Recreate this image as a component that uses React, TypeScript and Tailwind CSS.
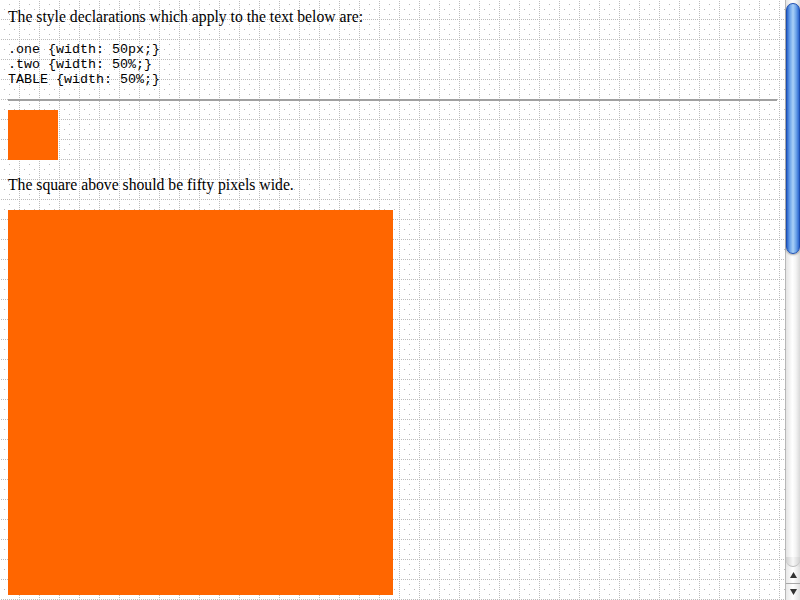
import React from "react";

const GridBg = () => {
  const odds = Array.from({ length: 10 }, (_, i) => i * 2 + 1);
  return (
    <svg className="absolute inset-0 w-full h-full" shapeRendering="crispEdges" aria-hidden="true">
      <defs>
        <pattern id="grid" width="20" height="20" patternUnits="userSpaceOnUse">
          {odds.map((y) => (
            <rect key={"v" + y} x={19} y={y} width={1} height={1} fill="#bbbbbb" />
          ))}
          {odds.slice(0, 9).map((x) => (
            <rect key={"h" + x} x={x} y={19} width={1} height={1} fill="#bbbbbb" />
          ))}
          <rect x={9} y={4} width={1} height={1} fill="#bbbbbb" />
          <rect x={4} y={9} width={1} height={1} fill="#bbbbbb" />
          <rect x={14} y={9} width={1} height={1} fill="#bbbbbb" />
          <rect x={9} y={14} width={1} height={1} fill="#bbbbbb" />
        </pattern>
      </defs>
      <rect width="100%" height="100%" fill="url(#grid)" />
    </svg>
  );
};

const Scrollbar = () => (
  <div className="w-[15px] h-[600px] flex flex-col border-l border-[#b8b8b8] bg-[linear-gradient(to_right,#e4e4e4,#ffffff_45%,#f4f4f4_70%,#d8d8d8)]">
    <div className="h-[3px]" />
    <div className="h-[251px] rounded-full border border-[#1d4fb0] bg-[linear-gradient(to_right,#2a63cc,#6fa6ea_25%,#a9d0f7_50%,#6ea5ea_75%,#2c66d0)] shadow-[0_1px_2px_rgba(0,0,0,0.35)]" />
    <div className="flex-1" />
    <div className="h-[10px] rounded-b-full bg-[linear-gradient(to_right,#cfcfcf,#f8f8f8_50%,#d0d0d0)] border-b border-[#bcbcbc]" />
    <div className="h-[17px] flex items-center justify-center bg-[linear-gradient(to_right,#e8e8e8,#ffffff_50%,#e0e0e0)] border-b border-[#a8a8a8]">
      <svg width="7" height="6" viewBox="0 0 7 6">
        <polygon points="3.5,0 7,6 0,6" fill="#333" />
      </svg>
    </div>
    <div className="h-[16px] flex items-center justify-center bg-[linear-gradient(to_right,#e8e8e8,#ffffff_50%,#e0e0e0)]">
      <svg width="7" height="6" viewBox="0 0 7 6">
        <polygon points="0,0 7,0 3.5,6" fill="#333" />
      </svg>
    </div>
  </div>
);

export default function App() {
  return (
    <div className="w-[800px] h-[600px] overflow-hidden bg-white flex">
      <div className="relative w-[785px] h-[600px] overflow-hidden">
        <GridBg />
        <div className="relative p-2 text-black">
          <p className="font-['Liberation_Serif',serif] text-[15.7px] leading-[18px]">
            The style declarations which apply to the text below are:
          </p>
          <pre className="mt-4 font-['Liberation_Mono',monospace] text-[13.33px] leading-[15px]">
{`.one {width: 50px;}
.two {width: 50%;}
TABLE {width: 50%;}`}
          </pre>
          <div className="mt-[12px] h-[2px] bg-[#a0a0a0]" />
          <div className="mt-[9px] w-[50px] h-[50px] bg-[#ff6600]" />
          <p className="mt-4 font-['Liberation_Serif',serif] text-[15.7px] leading-[18px]">
            The square above should be fifty pixels wide.
          </p>
          <div className="mt-4 w-[385px] h-[385px] bg-[#ff6600]" />
        </div>
      </div>
      <Scrollbar />
    </div>
  );
}
